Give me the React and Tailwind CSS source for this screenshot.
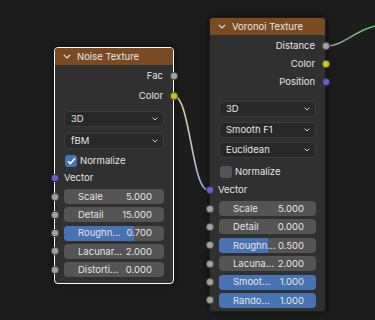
import React from "react";

const SOCKET = {
  grey: "bg-[#a1a1a1]",
  yellow: "bg-[#c7c729]",
  purple: "bg-[#6363c7]",
};

function Socket({ color, side }) {
  return (
    <span
      className={`absolute top-1/2 -translate-y-1/2 w-[8px] h-[8px] rounded-full border border-black/50 ${SOCKET[color]} ${
        side === "left" ? "left-[-4.5px]" : "right-[-4.5px]"
      }`}
    />
  );
}

function Header({ title }) {
  return (
    <div className="h-[17px] bg-[#7a4a20] rounded-t-[3px] flex items-center pl-[8px] gap-[6px] text-[#e8e8e8]">
      <svg width="8" height="5" viewBox="0 0 8 5" className="shrink-0">
        <path d="M0.8 0.8 L4 4 L7.2 0.8" fill="none" stroke="#e8e8e8" strokeWidth="1.1" />
      </svg>
      <span>{title}</span>
    </div>
  );
}

function Output({ label, color, h }) {
  return (
    <div className={`relative flex items-center justify-end pr-[10px] ${h}`}>
      <span>{label}</span>
      <Socket color={color} side="right" />
    </div>
  );
}

function Dropdown({ value, mt }) {
  return (
    <div
      className={`${mt} h-[16px] mx-[9px] rounded-[4px] bg-[#282828] border border-[#3b3b3b] flex items-center justify-between pl-[6px] pr-[5px]`}
    >
      <span>{value}</span>
      <svg width="6" height="4" viewBox="0 0 6 4">
        <path d="M0.6 0.6 L3 3 L5.4 0.6" fill="none" stroke="#cfcfcf" strokeWidth="1" />
      </svg>
    </div>
  );
}

function Check({ checked, mt }) {
  return (
    <div className={`${mt} h-[12px] mx-[10px] flex items-center gap-[3px]`}>
      <span
        className={`w-[12px] h-[12px] rounded-[3px] flex items-center justify-center ${
          checked ? "bg-[#4772b3]" : "bg-[#545454]"
        }`}
      >
        {checked && (
          <svg width="9" height="8" viewBox="0 0 9 8">
            <path d="M1 4.2 L3.4 6.6 L8 1.2" fill="none" stroke="#ffffff" strokeWidth="1.6" />
          </svg>
        )}
      </span>
      <span>Normalize</span>
    </div>
  );
}

function FieldRow({ label, value, fill }) {
  // socket sits on the node edge, 9px left of the field
  return (
    <div className="relative">
      <Socket color="grey" side="left" />
      <div className="h-[15px] mx-[9px] rounded-[4px] bg-[#545454] overflow-hidden relative flex items-center justify-between pl-[14px] pr-[12px]">
        {fill > 0 && (
          <span className="absolute left-0 top-0 bottom-0 bg-[#4772b3]" style={{ width: `${fill * 100}%` }} />
        )}
        <span className="relative">{label}</span>
        <span className="relative">{value}</span>
      </div>
    </div>
  );
}

export default function App() {
  return (
    <div
      className="relative w-[375px] h-[320px] overflow-hidden bg-[#1d1d1d] text-[9.5px] leading-none text-[#e4e4e4]"
      style={{ fontFamily: "Inter, 'Noto Sans', sans-serif" }}
    >
      {/* links */}
      <svg className="absolute inset-0" width="375" height="320">
        <defs>
          <linearGradient id="l1" x1="0" y1="96" x2="0" y2="190" gradientUnits="userSpaceOnUse">
            <stop offset="0" stopColor="#d9d99a" />
            <stop offset="1" stopColor="#a9a9e6" />
          </linearGradient>
          <linearGradient id="l2" x1="330" y1="0" x2="372" y2="0" gradientUnits="userSpaceOnUse">
            <stop offset="0" stopColor="#9c9c9c" />
            <stop offset="1" stopColor="#5cc95c" />
          </linearGradient>
        </defs>
        <path d="M174 96 C190 96 192 190 208 190" fill="none" stroke="url(#l1)" strokeWidth="1.6" />
        <path d="M326 46 C346 46 356 26 392 23" fill="none" stroke="url(#l2)" strokeWidth="1.6" />
      </svg>

      {/* Noise Texture */}
      <div className="absolute left-[54px] top-[47px] w-[120px] h-[237px] rounded-[4px] border border-white bg-[#303030] shadow-[0_0_8px_rgba(0,0,0,0.6)] flex flex-col">
        <Header title="Noise Texture" />
        <div className="mt-[1px]">
          <Output label="Fac" color="grey" h="h-[20px]" />
          <Output label="Color" color="yellow" h="h-[20px]" />
        </div>
        <Dropdown value="3D" mt="mt-[5px]" />
        <Dropdown value="fBM" mt="mt-[6px]" />
        <Check checked mt="mt-[6px]" />
        <div className="relative mt-[3px] h-[16px] flex items-center pl-[9px]">
          <span>Vector</span>
          <Socket color="purple" side="left" />
        </div>
        <div className="mt-[3px] flex flex-col gap-[3.3px]">
          <FieldRow label="Scale" value="5.000" fill={0} />
          <FieldRow label="Detail" value="15.000" fill={0} />
          <FieldRow label="Roughn..." value="0.700" fill={0.7} />
          <FieldRow label="Lacunar..." value="2.000" fill={0} />
          <FieldRow label="Distorti..." value="0.000" fill={0} />
        </div>
      </div>

      {/* Voronoi Texture */}
      <div className="absolute left-[209px] top-[17px] w-[117px] h-[295px] rounded-[4px] border border-black/40 bg-[#303030] shadow-[0_0_8px_rgba(0,0,0,0.6)] flex flex-col">
        <Header title="Voronoi Texture" />
        <div className="mt-[2px]">
          <Output label="Distance" color="grey" h="h-[18px]" />
          <Output label="Color" color="yellow" h="h-[18px]" />
          <Output label="Position" color="purple" h="h-[18px]" />
        </div>
        <Dropdown value="3D" mt="mt-[10px]" />
        <Dropdown value="Smooth F1" mt="mt-[5px]" />
        <Dropdown value="Euclidean" mt="mt-[4px]" />
        <Check checked={false} mt="mt-[8px]" />
        <div className="relative mt-[4px] h-[16px] flex items-center pl-[8px]">
          <span>Vector</span>
          <Socket color="purple" side="left" />
        </div>
        <div className="mt-[3px] flex flex-col gap-[3.4px]">
          <FieldRow label="Scale" value="5.000" fill={0} />
          <FieldRow label="Detail" value="0.000" fill={0} />
          <FieldRow label="Roughn..." value="0.500" fill={0.5} />
          <FieldRow label="Lacuna..." value="2.000" fill={0} />
          <FieldRow label="Smoot..." value="1.000" fill={1} />
          <FieldRow label="Rando..." value="1.000" fill={1} />
        </div>
      </div>
    </div>
  );
}
